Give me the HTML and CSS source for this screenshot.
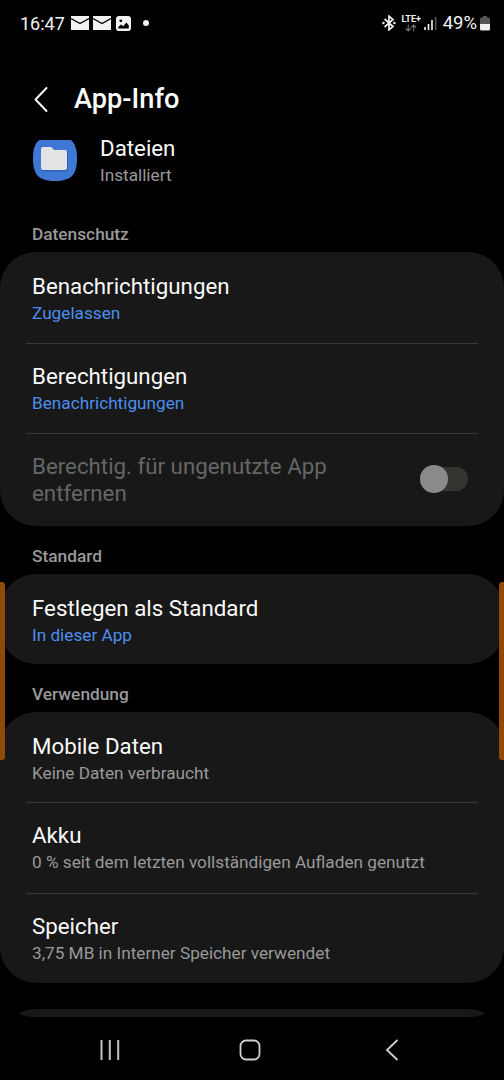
FILE: index.html
```
<!DOCTYPE html>
<html lang="de">
<head>
    <meta charset="UTF-8">
    <meta name="viewport" content="width=device-width, initial-scale=1.0">
    <title>App-Info</title>
    <link rel="stylesheet" href="styles.css">
</head>
<body>
    <div class="statusBar">
        <span class="time">16:47</span>
        <svg class="mail" width="18" height="14" viewBox="0 0 18 14">
            <rect width="18" height="14" fill="#f2f2f2"/>
            <path d="M0 2.5L9 7.5L18 2.5" fill="none" stroke="#000" stroke-width="1.4"/>
        </svg>
        <svg class="mail" width="18" height="14" viewBox="0 0 18 14">
            <rect width="18" height="14" fill="#f2f2f2"/>
            <path d="M0 2.5L9 7.5L18 2.5" fill="none" stroke="#000" stroke-width="1.4"/>
        </svg>
        <svg class="picture" width="15" height="15" viewBox="0 0 15 15">
            <rect x="0.8" y="0.8" width="13.4" height="13.4" rx="2" fill="none" stroke="#f2f2f2" stroke-width="1.6"/>
            <circle cx="4.8" cy="4.8" r="1.5" fill="#f2f2f2"/>
            <path d="M1 1H14V14H1Z" fill="#f2f2f2"/>
            <circle cx="4.8" cy="4.8" r="1.4" fill="#000"/>
            <path d="M2.3 12.4V11L5 8.4L7.3 10.2L10.4 6.6L12.8 9.4V12.4Z" fill="#000"/>
        </svg>
        <span class="dot"></span>

        <div class="statusRight">
            <svg class="bluetooth" width="14" height="16" viewBox="0 0 14 16">
                <path d="M2.6 4L11 11.5L7 14.8V1.2L11 4.5L2.6 12" fill="none" stroke="#f2f2f2" stroke-width="1.7"/>
                <circle cx="1.4" cy="8" r="1.2" fill="#f2f2f2"/>
                <circle cx="12.4" cy="8" r="1.2" fill="#f2f2f2"/>
            </svg>
            <div class="lte">
                <span>LTE+</span>
                <svg width="12" height="8" viewBox="0 0 12 8">
                    <path d="M3.3 0.5V7M0.8 4.5L3.3 7L5.8 4.5M8.7 7.5V1M6.2 3.5L8.7 1L11.2 3.5" fill="none" stroke="#707070" stroke-width="1.1"/>
                </svg>
            </div>
            <svg class="signal" width="13" height="14" viewBox="0 0 13 14">
                <path d="M1 11V14M4.5 8V14M8 4V14" stroke="#f2f2f2" stroke-width="1.6"/>
                <path d="M11.7 1V14" stroke="#555" stroke-width="1.6"/>
            </svg>
            <span class="percent">49%</span>
            <svg class="battery" width="10" height="15" viewBox="0 0 10 15">
                <path d="M3 0H7V1.5H8.5Q10 1.5 10 3V8H0V3Q0 1.5 1.5 1.5H3Z" fill="#555"/>
                <path d="M0 8H10V13Q10 14.5 8.5 14.5H1.5Q0 14.5 0 13Z" fill="#f2f2f2"/>
            </svg>
        </div>
    </div>

    <header class="header">
        <svg width="14" height="25" viewBox="0 0 14 25">
            <path d="M12.5 1L1.5 12.5L12.5 24" fill="none" stroke="#fafafa" stroke-width="1.9" stroke-linecap="round" stroke-linejoin="round"/>
        </svg>
        <h1>App-Info</h1>
    </header>

    <main class="content">
        <div class="app">
            <svg class="appIcon" width="46" height="41" viewBox="0 0 46 41">
                <path d="M23 -4C39 -4 45 2 45 18.5C45 35 39 41 23 41C7 41 1 35 1 18.5C1 2 7 -4 23 -4Z" fill="#3f78d4"/>
                <path d="M9 10Q9 8 11 8H33.5Q36 8 36 12.5V29Q36 31.5 33.5 31.5H11Q9 31 9 29Z" fill="#2d62b5"/>
                <path d="M9 9Q9 7 11 7H18.5Q19.5 7 20.2 7.8L22 9.8H33Q35 9.8 35 11.8V28Q35 30 33 30H11Q9 30 9 28Z" fill="#e2e3e5"/>
                <path d="M20.5 7H36V11.5Q35.500 9.800 33 9.800H22Z" fill="#3f78d4"/>
            </svg>
            <div class="appText">
                <div class="title">Dateien</div>
                <div class="sub">Installiert</div>
            </div>
        </div>

        <h2>Datenschutz</h2>
        <section class="card">
            <div class="row">
                <div class="title">Benachrichtigungen</div>
                <div class="sub blue">Zugelassen</div>
            </div>
            <div class="row">
                <div class="title">Berechtigungen</div>
                <div class="sub blue">Benachrichtigungen</div>
            </div>
            <div class="row switchRow">
                <div class="title disabled">Berechtig. für ungenutzte App entfernen</div>
                <div class="switch"><span class="knob"></span></div>
            </div>
        </section>

        <h2>Standard</h2>
        <section class="card">
            <div class="row">
                <div class="title">Festlegen als Standard</div>
                <div class="sub blue">In dieser App</div>
            </div>
        </section>

        <h2>Verwendung</h2>
        <section class="card">
            <div class="row">
                <div class="title">Mobile Daten</div>
                <div class="sub">Keine Daten verbraucht</div>
            </div>
            <div class="row">
                <div class="title">Akku</div>
                <div class="sub">0 % seit dem letzten vollständigen Aufladen genutzt</div>
            </div>
            <div class="row">
                <div class="title">Speicher</div>
                <div class="sub">3,75 MB in Interner Speicher verwendet</div>
            </div>
        </section>

        <section class="card nextCard"></section>
    </main>

    <nav class="navBar">
        <svg width="20" height="22" viewBox="0 0 20 22">
            <path d="M1.5 1V21M9.8 1V21M18.2 1V21" stroke="#c4c4c4" stroke-width="2"/>
        </svg>
        <svg class="home" width="22" height="22" viewBox="0 0 22 22">
            <rect x="1.5" y="1.5" width="19" height="19" rx="5.5" fill="none" stroke="#d0d0d0" stroke-width="1.8"/>
        </svg>
        <svg width="14" height="22" viewBox="0 0 14 22">
            <path d="M12.5 1L2 11L12.5 21" fill="none" stroke="#d0d0d0" stroke-width="1.8"/>
        </svg>
    </nav>

    <div class="edge edgeLeft"></div>
    <div class="edge edgeRight"></div>
</body>
</html>
```
FILE: styles.css
```
* {
    box-sizing: border-box;
}

body {
    margin: 0;
    height: 1080px;
    position: relative;
    overflow: hidden;
    display: flex;
    flex-direction: column;
    background-color: #000;
    color: #fafafa;
    font-family: Roboto, "Liberation Sans", sans-serif;
}

svg {
    display: block;
    flex-shrink: 0;
}

.statusBar {
    height: 46px;
    padding: 0 14px 0 20px;
    display: flex;
    align-items: center;
    color: #f2f2f2;
    font-size: 18px;
}

.time {
    width: 51px;
}

.mail {
    margin-right: 4px;
}

.picture {
    margin-left: 1px;
    border-radius: 2px;
}

.dot {
    width: 6px;
    height: 6px;
    margin-left: 12px;
    border-radius: 50%;
    background-color: #f2f2f2;
}

.statusRight {
    margin-left: auto;
    display: flex;
    align-items: center;
}

.bluetooth {
    margin-right: 1px;
}

.lte {
    width: 19px;
    margin-left: 5px;
    display: flex;
    flex-direction: column;
    align-items: center;
    font-size: 9px;
    font-weight: 700;
    line-height: 8px;
}

.lte svg {
    margin-top: 1px;
}

.signal {
    margin: 0 6px 0 3px;
}

.percent {
    font-size: 18.5px;
}

.battery {
    margin-left: 3px;
}

.header {
    height: 89px;
    padding: 17px 0 0 34px;
    display: flex;
    align-items: center;
    gap: 26px;
}

h1 {
    margin: 0;
    font-size: 27.2px;
    font-weight: 500;
}

.content {
    height: 882px;
    overflow: hidden;
    border-radius: 0 0 34px 34px;
}

.app {
    height: 82px;
    padding-left: 32px;
    display: flex;
    align-items: flex-start;
    gap: 22px;
}

.appIcon {
    margin-top: 5px;
}

h2 {
    margin: 0;
    height: 35px;
    padding-left: 32px;
    color: #999;
    font-size: 17.3px;
    font-weight: 500;
    line-height: 35px;
}

.card {
    margin-bottom: 12.5px;
    padding: 0 26px;
    border-radius: 36px;
    background-color: #181818;
}

.row {
    height: 90.5px;
    padding: 21px 6px 0;
}

.row + .row {
    padding-top: 19px;
    border-top: 1.5px solid #383838;
}

.title {
    font-size: 22.3px;
    line-height: 27px;
}

.sub {
    color: #999;
    font-size: 17.2px;
    line-height: 27px;
}

.blue {
    color: #4c8eee;
}

.switchRow {
    height: 93px;
    display: flex;
    justify-content: space-between;
}

.disabled {
    width: 320px;
    color: #666;
}

.switch {
    width: 48px;
    height: 24px;
    margin: 14px 4px 0 0;
    display: flex;
    align-items: center;
    border-radius: 12px;
    background-color: #35352f;
}

.knob {
    width: 28px;
    height: 28px;
    border-radius: 50%;
    background-color: #8a8a8a;
}

.nextCard {
    height: 90px;
    margin-top: 26px;
}

.navBar {
    height: 63px;
    padding: 3px 105px 0 100px;
    display: flex;
    align-items: center;
    justify-content: space-between;
}

.home {
    margin-right: 5px;
}

/* edge panel handles lie over the content on both sides */
.edge {
    position: absolute;
    top: 582px;
    width: 5px;
    height: 178px;
    background-color: #8f4a08;
}

.edgeLeft {
    left: 0;
    border-radius: 0 3px 3px 0;
}

.edgeRight {
    right: 0;
    border-radius: 3px 0 0 3px;
}
```
